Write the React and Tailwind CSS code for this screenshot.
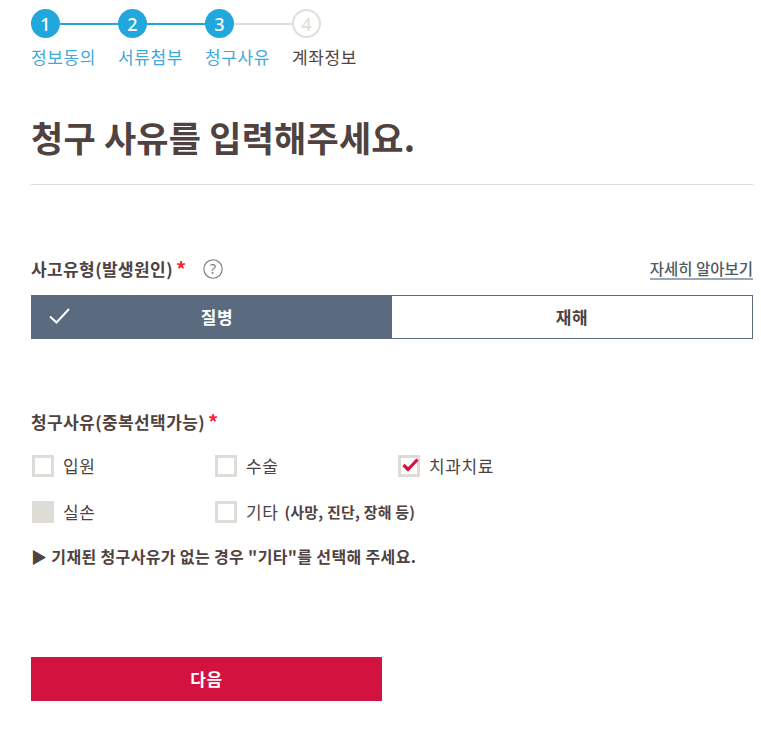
const font = { fontFamily: '"Noto Sans CJK KR", "Noto Sans", sans-serif' };

function Step({ n, label, state, last }) {
  const done = state === "done";
  return (
    <div className="flex w-[87px] shrink-0 flex-col">
      <div className="flex h-[29px] items-center">
        <div className={`flex h-[29px] w-[29px] shrink-0 items-center justify-center rounded-full text-[18px] font-medium leading-none [font-family:'Noto_Sans',sans-serif] ${done ? "bg-[#22a7dc] text-white" : "border-2 border-[#dfdfda] bg-white text-[#dfdfda]"}`}>
          {n}
        </div>
        {!last && <div className={`h-[2px] w-[58px] ${n < 3 ? "bg-[#22a7dc]" : "bg-[#dfdfda]"}`} />}
      </div>
      <div className={`mt-[8px] whitespace-nowrap text-[17px] leading-[22px] tracking-[0.6px] ${done ? "text-[#3fa9dc]" : "text-[#4f4240]"}`}>{label}</div>
    </div>
  );
}

function Check({ label, state, extra, w = "w-[183px]" }) {
  return (
    <div className={`flex h-[22px] items-center ${w}`}>
      <div className={`flex h-[22px] w-[22px] shrink-0 items-center justify-center border-[3px] border-[#dddcd6] ${state === "disabled" ? "bg-[#dddcd6]" : "bg-white"}`}>
        {state === "checked" && (
          <svg className="ml-[2px] mb-[2px] shrink-0 overflow-visible" width="17" height="14" viewBox="0 0 17 14" fill="none">
            <path d="M1.5 7 L6 11.5 L15.5 1.5" stroke="#d4123f" strokeWidth="3.2" />
          </svg>
        )}
      </div>
      <span className="ml-[9px] whitespace-nowrap text-[17px] leading-[22px] tracking-[0.6px] text-[#4f4240]">{label}</span>
      {extra && <span className="ml-[6px] whitespace-nowrap text-[15px] font-bold leading-[22px] tracking-[0.2px] text-[#4f4240]">{extra}</span>}
    </div>
  );
}

export default function App() {
  return (
    <div style={font} className="h-[731px] w-[761px] overflow-hidden bg-white pl-[31px] pr-2 text-[#4f4240]">
      <div className="flex pt-[9px]">
        <Step n={1} label="정보동의" state="done" />
        <Step n={2} label="서류첨부" state="done" />
        <Step n={3} label="청구사유" state="done" />
        <Step n={4} label="계좌정보" state="todo" last />
      </div>

      <h1 className="mt-[45px] whitespace-nowrap text-[35px] font-bold leading-[48px] tracking-[0.2px] text-[#4f4240]">청구 사유를 입력해주세요.</h1>
      <div className="mt-[23px] h-px bg-[#dddddd]" />

      <div className="mt-[73px] flex h-[37px] items-start justify-between">
        <div className="flex h-[22px] items-center">
          <span className="text-[17px] font-bold leading-[22px] tracking-[0.4px]">사고유형(발생원인)</span>
          <span className="ml-[3px] text-[20px] font-bold leading-[22px] text-[#ff2030]">*</span>
          <svg className="ml-[17px]" width="20" height="20" viewBox="0 0 20 20" fill="none">
            <circle cx="10" cy="10" r="9.2" stroke="#7a7a7a" strokeWidth="1.1" />
            <text x="10" y="15" textAnchor="middle" fontSize="14" fill="#7a7a7a" fontFamily="Noto Sans">?</text>
          </svg>
        </div>
        <a className="border-b-2 border-[#9aa5b6] text-[15.5px] font-medium leading-[20px] text-[#4f5a66]">자세히 알아보기</a>
      </div>

      <div className="flex h-[44px] border border-[#5a6b80]">
        <div className="relative flex w-[360px] items-center justify-center bg-[#5a6b80] pl-[10px] text-[17px] font-bold tracking-[0.6px] text-white">
          <svg className="absolute left-[17px] top-[11px]" width="21" height="18" viewBox="0 0 21 18" fill="none">
            <path d="M1 9.5 L7.5 15.5 L20 2" stroke="white" strokeWidth="2" />
          </svg>
          질병
        </div>
        <div className="flex flex-1 items-center justify-center bg-white text-[17px] font-bold tracking-[0.6px] text-[#4f4240]">재해</div>
      </div>

      <div className="mt-[72px] flex h-[22px] items-center">
        <span className="text-[17px] font-bold leading-[22px] tracking-[0.4px]">청구사유(중복선택가능)</span>
        <span className="ml-[3px] text-[20px] font-bold leading-[22px] text-[#ff2030]">*</span>
      </div>

      <div className="ml-[1px] mt-[22px] flex">
        <Check label="입원" />
        <Check label="수술" />
        <Check label="치과치료" state="checked" w="w-auto" />
      </div>
      <div className="ml-[1px] mt-[24px] flex">
        <Check label="실손" state="disabled" />
        <Check label="기타" extra="(사망, 진단, 장해 등)" w="w-auto" />
      </div>

      <p className="mt-[22px] whitespace-nowrap text-[16px] font-bold leading-[22px] tracking-[0.35px]">▶ 기재된 청구사유가 없는 경우 "기타"를 선택해 주세요.</p>

      <button className="mt-[90px] block h-[44px] w-[351px] bg-[#d4123f] text-[17px] font-bold tracking-[0.6px] text-white">다음</button>
    </div>
  );
}
